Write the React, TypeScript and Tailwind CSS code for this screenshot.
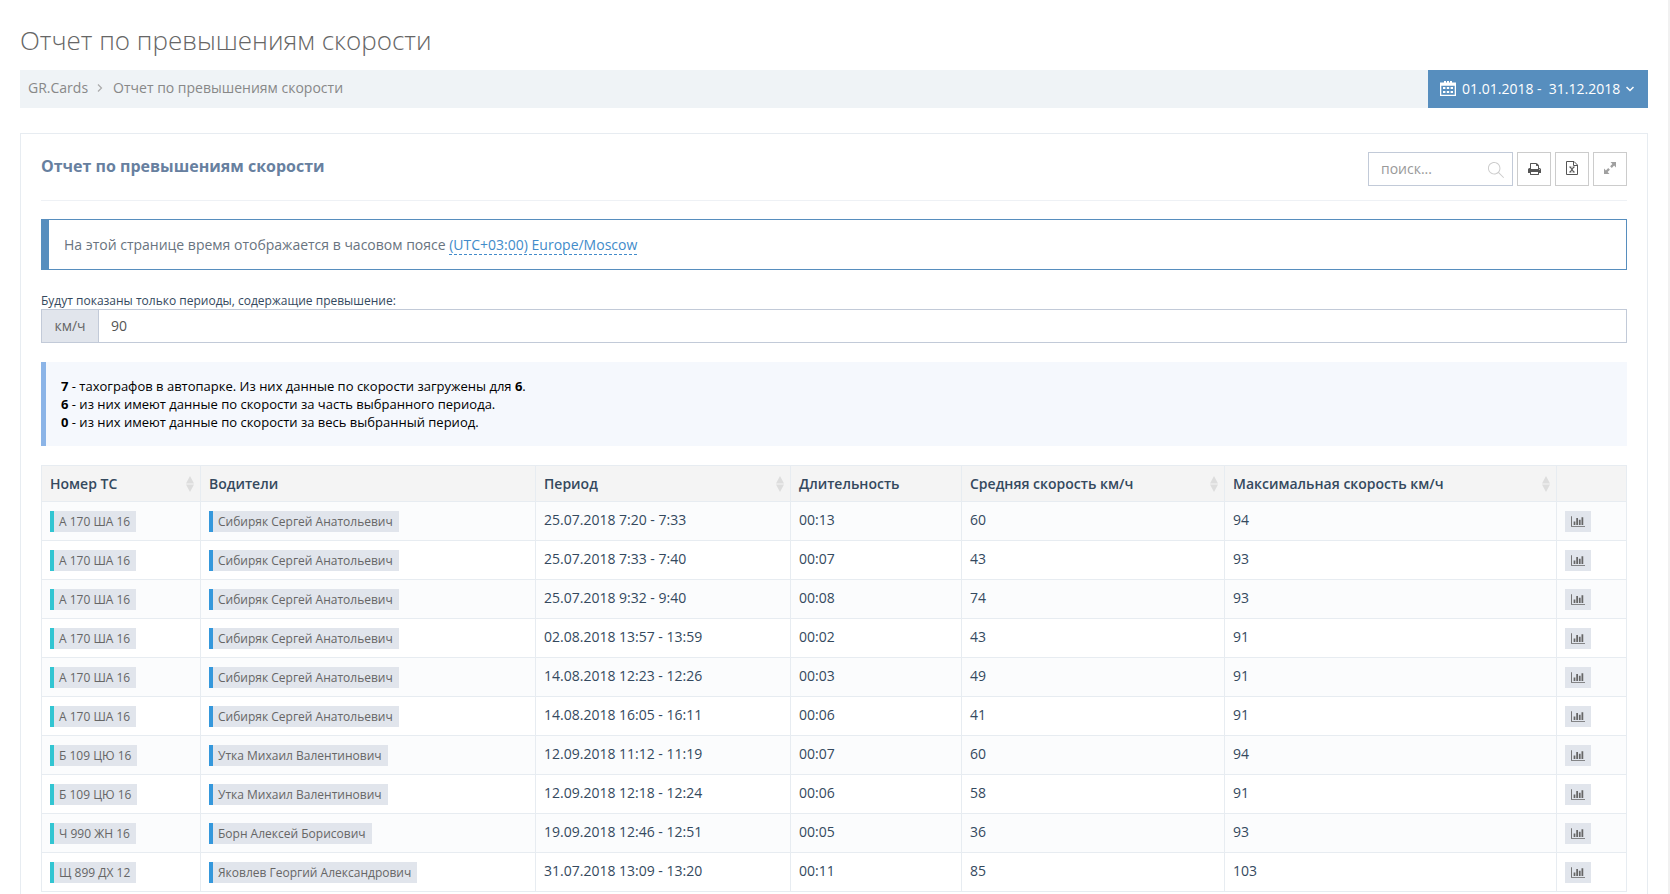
import React from 'react';
import clsx from 'clsx';
import { SlMagnifier } from 'react-icons/sl';

const rows = [
  { plate: 'А 170 ША 16', driver: 'Сибиряк Сергей Анатольевич', period: '25.07.2018 7:20 - 7:33', duration: '00:13', avg: 60, max: 94 },
  { plate: 'А 170 ША 16', driver: 'Сибиряк Сергей Анатольевич', period: '25.07.2018 7:33 - 7:40', duration: '00:07', avg: 43, max: 93 },
  { plate: 'А 170 ША 16', driver: 'Сибиряк Сергей Анатольевич', period: '25.07.2018 9:32 - 9:40', duration: '00:08', avg: 74, max: 93 },
  { plate: 'А 170 ША 16', driver: 'Сибиряк Сергей Анатольевич', period: '02.08.2018 13:57 - 13:59', duration: '00:02', avg: 43, max: 91 },
  { plate: 'А 170 ША 16', driver: 'Сибиряк Сергей Анатольевич', period: '14.08.2018 12:23 - 12:26', duration: '00:03', avg: 49, max: 91 },
  { plate: 'А 170 ША 16', driver: 'Сибиряк Сергей Анатольевич', period: '14.08.2018 16:05 - 16:11', duration: '00:06', avg: 41, max: 91 },
  { plate: 'Б 109 ЦЮ 16', driver: 'Утка Михаил Валентинович', period: '12.09.2018 11:12 - 11:19', duration: '00:07', avg: 60, max: 94 },
  { plate: 'Б 109 ЦЮ 16', driver: 'Утка Михаил Валентинович', period: '12.09.2018 12:18 - 12:24', duration: '00:06', avg: 58, max: 91 },
  { plate: 'Ч 990 ЖН 16', driver: 'Борн Алексей Борисович', period: '19.09.2018 12:46 - 12:51', duration: '00:05', avg: 36, max: 93 },
  { plate: 'Щ 899 ДХ 12', driver: 'Яковлев Георгий Александрович', period: '31.07.2018 13:09 - 13:20', duration: '00:11', avg: 85, max: 103 },
];

const columns = [
  { label: 'Номер ТС', width: 'w-[159px]', sortable: true },
  { label: 'Водители', width: 'w-[335px]', sortable: false },
  { label: 'Период', width: 'w-[255px]', sortable: true },
  { label: 'Длительность', width: 'w-[171px]', sortable: false },
  { label: 'Средняя скорость км/ч', width: 'w-[263px]', sortable: true },
  { label: 'Максимальная скорость км/ч', width: 'w-[332px]', sortable: true },
];

const CalendarIcon = () => (
  <svg width="16" height="16" viewBox="0 0 16 16" fill="currentColor" aria-hidden="true">
    <path fillRule="evenodd" d="M0 1.500h16V15H0zM1.300 4.800v8.900h13.400V4.800z" />
    <path d="M4 0h2v3H4zM7 0h2v3H7zM10 0h2v3h-2z" />
    <path d="M3 6h2.400v2H3zM6.800 6h2.400v2H6.800zM10.600 6H13v2h-2.400zM3 10h2.400v2H3zM6.800 10h2.400v2H6.800zM10.600 10H13v2h-2.400z" />
  </svg>
);

const ChevronRight = () => (
  <svg width="6" height="8" viewBox="0 0 6 8" fill="none" stroke="currentColor" strokeWidth="1.200" className="mr-[10px] ml-[9px] text-[#aaaaaa]" aria-hidden="true">
    <path d="M1 .5L4.500 4 1 7.500" />
  </svg>
);

const ChevronDown = () => (
  <svg width="8" height="6" viewBox="0 0 8 6" fill="none" stroke="currentColor" strokeWidth="1.500" aria-hidden="true">
    <path d="M.5 1L4 4.500 7.500 1" />
  </svg>
);

const PrintIcon = () => (
  <svg width="13" height="13" viewBox="0 0 1664 1664" fill="currentColor" aria-hidden="true">
    <path d="M384 1536h896v-256h-896v256zM384 896h896v-384h-160q-40 0-68-28t-28-68v-160h-640v640zM1536 960q0-26-19-45t-45-19-45 19-19 45 19 45 45 19 45-19 19-45zM1664 960v416q0 13-9.500 22.500t-22.500 9.500h-224v160q0 40-28 68t-68 28h-960q-40 0-68-28t-28-68v-160h-224q-13 0-22.500-9.500t-9.500-22.500v-416q0-79 56.500-135.500t135.500-56.500h64v-544q0-40 28-68t68-28h672q40 0 88 20t76 48l152 152q28 28 48 76t20 88v256h64q79 0 135.500 56.500t56.500 135.500z" />
  </svg>
);

const ExcelIcon = () => (
  <svg width="12" height="14" viewBox="0 0 12 14" fill="none" stroke="currentColor" aria-hidden="true">
    <path d="M.5.5h7.500l3.500 3.500v9.500H.5zM7.500.5v4h4" />
    <path d="M4.200 6l3.600 5M7.800 6l-3.600 5" strokeWidth="1.200" />
    <path d="M3.200 6h2.200M6.600 6h2.200M3.200 11h2.200M6.600 11h2.200" strokeWidth="0.900" />
  </svg>
);

const ExpandIcon = () => (
  <svg width="12" height="12" viewBox="0 0 12 12" fill="currentColor" aria-hidden="true">
    <path d="M6.500 0H12v5.500l-1.900-1.900-2.300 2.300-1.700-1.700 2.300-2.300zM5.500 12H0V6.500l1.900 1.900 2.300-2.300 1.700 1.700-2.300 2.300z" />
  </svg>
);

const ChartIcon = () => (
  <svg width="14" height="11" viewBox="0 0 2048 1536" fill="currentColor" aria-hidden="true">
    <path d="M640 768v512h-256v-512h256zM1024 256v1024h-256v-1024h256zM2048 1408v128h-2048v-1536h128v1408h1920zM1408 512v768h-256v-768h256zM1792 128v1152h-256v-1152h256z" />
  </svg>
);

const SortIcon = () => (
  <svg width="8" height="16" viewBox="0 0 8 16" fill="currentColor" className="text-[#dddddd]" aria-hidden="true">
    <path d="M4 0l4 7.500H0zM4 16L0 8.500h8z" />
  </svg>
);

const Tag = ({ color, children }: { color: string; children: React.ReactNode }) => (
  <span className={clsx('block h-[21px] w-fit border-l-4 bg-[#e1e5ec] pr-[6px] pl-[5px] text-[12px] leading-[21px] text-[#666666]', color)}>
    {children}
  </span>
);

const ToolButton = ({ label, className, children }: { label: string; className: string; children: React.ReactNode }) => (
  <button
    type="button"
    aria-label={label}
    className={clsx('flex h-[34px] w-[34px] items-center justify-center border border-[#cccccc] bg-white pb-[2px]', className)}
  >
    {children}
  </button>
);

export default function App() {
  return (
    <div className="min-h-screen overflow-hidden border-r-2 border-[#f1f1f1] bg-white px-5 pt-6 pb-5 font-['Open_Sans',sans-serif] text-sm text-[#34495e]">
      <h1 className="mb-[13px] text-[26px] leading-[33px] font-light text-[#666666]">Отчет по превышениям скорости</h1>

      <div className="mb-[25px] flex h-[38px] items-stretch justify-between bg-[#eff3f6]">
        <nav className="flex items-center px-2 pb-[2px] text-[#888888]">
          <a href="#">GR.Cards</a>
          <ChevronRight />
          <span>Отчет по превышениям скорости</span>
        </nav>
        <button type="button" className="flex w-[220px] items-center bg-[#578ebe] pl-3 text-white">
          <CalendarIcon />
          <span className="mx-[6px] whitespace-pre">01.01.2018 -  31.12.2018</span>
          <ChevronDown />
        </button>
      </div>

      <div className="border border-[#e7ecf1] px-5 pb-5">
        <div className="flex h-[67px] items-start justify-between border-b border-[#eef1f5] pt-[18px]">
          <h2 className="text-base leading-7 font-bold text-[#67809f]">Отчет по превышениям скорости</h2>
          <div className="flex gap-1">
            <div className="relative">
              <input
                type="text"
                aria-label="Поиск"
                placeholder="поиск..."
                className="h-[34px] w-[145px] border border-[#c2cad8] pr-8 pb-[2px] pl-3 outline-none placeholder:text-[#999999]"
              />
              <SlMagnifier className="absolute top-[10px] right-[9px] h-4 w-4 text-[#cccccc]" />
            </div>
            <ToolButton label="Печать" className="text-[#555555]"><PrintIcon /></ToolButton>
            <ToolButton label="Excel" className="text-[#555555]"><ExcelIcon /></ToolButton>
            <ToolButton label="На весь экран" className="text-[#a0a0a0]"><ExpandIcon /></ToolButton>
          </div>
        </div>

        <div className="mt-[18px] border border-l-8 border-[#578ebe] px-[15px] py-[14px] leading-[21px] text-[#697480]">
          На этой странице время отображается в часовом поясе{' '}
          <a href="#" className="border-b border-dashed border-[#428bca] text-[#428bca]">(UTC+03:00) Europe/Moscow</a>
        </div>

        <label htmlFor="speed" className="mt-[22px] block text-[12px] leading-[17px]">
          Будут показаны только периоды, содержащие превышение:
        </label>
        <div className="flex h-[34px] border border-[#c2cad8]">
          <span className="flex w-[57px] items-center justify-center border-r border-[#c2cad8] bg-[#e1e5ec] text-[#666666]">км/ч</span>
          <input id="speed" type="text" defaultValue="90" className="min-w-0 flex-1 px-3 text-[#555555] outline-none" />
        </div>

        <div className="mt-[19px] border-l-[5px] border-[#8bb4e7] bg-[#f5f8fd] p-[15px] text-[13px] leading-[18px] text-black">
          <p><b>7</b> - тахографов в автопарке. Из них данные по скорости загружены для <b>6</b>.</p>
          <p><b>6</b> - из них имеют данные по скорости за часть выбранного периода.</p>
          <p><b>0</b> - из них имеют данные по скорости за весь выбранный период.</p>
        </div>

        <table className="mt-[19px] w-full table-fixed border-collapse">
          <thead>
            <tr className="h-9 bg-[#f4f4f4] text-left">
              {columns.map((col) => (
                <th key={col.label} className={clsx('border border-[#e7ecf1] pr-[6px] pl-2 font-semibold', col.width)}>
                  <div className="flex items-center justify-between">
                    {col.label}
                    {col.sortable && <SortIcon />}
                  </div>
                </th>
              ))}
              <th className="w-[70px] border border-[#e7ecf1]" />
            </tr>
          </thead>
          <tbody>
            {rows.map((row) => (
              <tr key={row.period} className="h-[39px] odd:bg-[#fbfcfd] [&>td]:border [&>td]:border-[#e7ecf1] [&>td]:px-2 [&>td]:align-top">
                <td className="pt-[9px]"><Tag color="border-[#32c5d2]">{row.plate}</Tag></td>
                <td className="pt-[9px]"><Tag color="border-[#3598dc]">{row.driver}</Tag></td>
                <td className="pt-2">{row.period}</td>
                <td className="pt-2">{row.duration}</td>
                <td className="pt-2">{row.avg}</td>
                <td className="pt-2">{row.max}</td>
                <td className="pt-[9px]">
                  <button type="button" aria-label="График" className="flex h-[21px] w-[26px] items-center justify-center bg-[#e1e5ec] text-[#666666]">
                    <ChartIcon />
                  </button>
                </td>
              </tr>
            ))}
          </tbody>
        </table>
      </div>
    </div>
  );
}
